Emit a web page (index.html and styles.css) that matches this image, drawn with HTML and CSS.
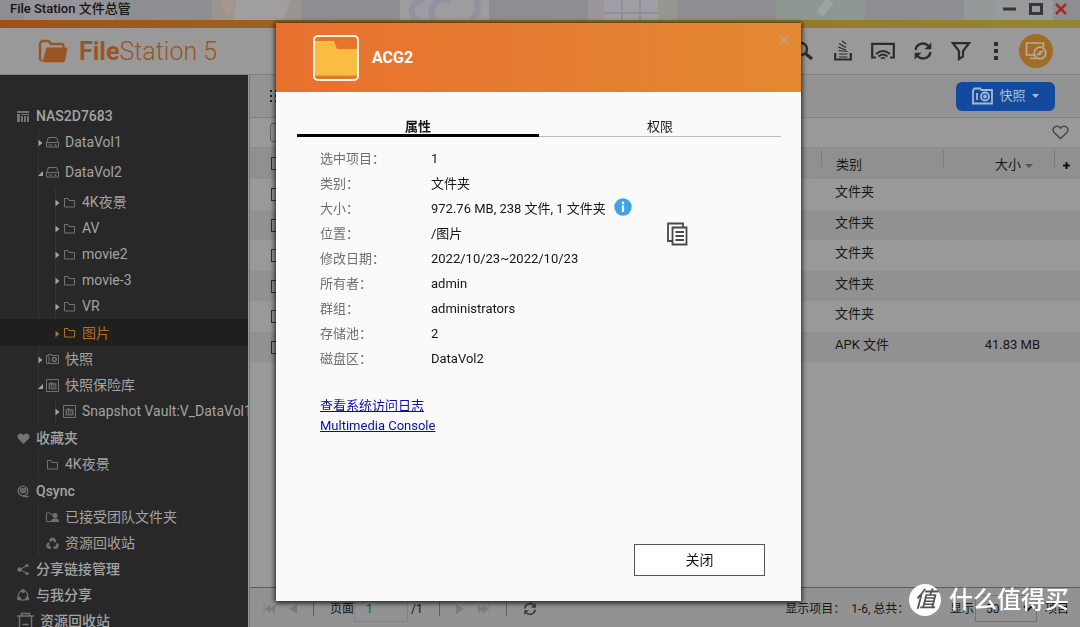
FILE: index.html
```html
<!DOCTYPE html>
<html lang="zh-CN">
<head>
<meta charset="utf-8">
<meta name="viewport" content="width=device-width, initial-scale=1">
<title>File Station 文件总管</title>
<link rel="stylesheet" href="styles.css">
</head>
<body>
<svg class="sprite" aria-hidden="true">
  <symbol id="i-folder" viewBox="0 0 13 13"><path d="M1.5 11V2.5H5l1 2h5.500V11z" fill="none" stroke="currentColor"/></symbol>
  <symbol id="i-disk" viewBox="0 0 13 13"><path d="M.5 6.500 2.500 1.500h8l2 5v4.500h-12zM.5 6.500h12M2.500 9h4" fill="none" stroke="currentColor"/><circle cx="9.500" cy="9" r="1" fill="currentColor"/></symbol>
  <symbol id="i-vault" viewBox="0 0 13 13"><path d="M.5.5h12v12H.5z" fill="none" stroke="currentColor"/><path d="M2.500 4h2V3h2v1h4v6.500h-8z" fill="currentColor" opacity=".8"/><path d="M4.500 5.500v4M6.500 6.500h2v2h-2z" fill="none" stroke="#282828" stroke-width=".7"/></symbol>
  <symbol id="i-closed" viewBox="0 0 5 8"><path d="M.5.8v6.400L4.500 4z" fill="currentColor"/></symbol>
  <symbol id="i-open" viewBox="0 0 5 8"><path d="M5 2v5H0z" fill="currentColor"/></symbol>
  <symbol id="i-refresh" viewBox="0 0 20 20"><path d="M2.500 9A7.500 7.500 0 0 1 15.500 5M17.500 11A7.500 7.500 0 0 1 4.500 15" fill="none" stroke="currentColor" stroke-width="2.400"/><path d="M18.300 1.500V8.300h-6.800zM1.700 18.500v-6.800h6.800z" fill="currentColor"/></symbol>
</svg>

<div class="app">
  <header class="titlebar">
    <svg class="titlebar-art" aria-hidden="true" width="100%" height="20">
      <g fill="#969499"><path d="M24 0h90v20H24z"/></g>
      <path d="M212 0h89v20h-89z" fill="#9b9590"/><path d="M235 0l-6 20-9-20z" fill="#a5978d"/><path d="M236 0h54l-7 20h-50z" fill="#a09e9e"/>
      <path d="M400 0h89v20h-89z" fill="#9d9da0"/><g fill="none" stroke="#9191a1" stroke-width="6"><path d="M424 0C407 4 410 14 418 22M434 22C426 4 440-4 450 0"/><path d="M476 0q6 12-6 20"/></g>
      <path d="M588 0h89v20h-89z" fill="#9a969b"/><path d="M604 0h54v20h-54z" fill="#9f9ea4"/><path d="M622 0v20M640 0v20M604 13h54" stroke="#8f8e9b" stroke-width="2"/><path d="M658 0h19v20h-19z" fill="#959892"/>
      <path d="M776 0h89v20h-89z" fill="#8f9792"/><path d="M820 14 830 0" stroke="#9da39f" stroke-width="9"/>
      <path d="M964 0h89v20h-89z" fill="#929998"/><path d="M995 0h58v20h-58z" fill="#989a9b"/>
    </svg>
    <h1 class="titlebar-text">File Station 文件总管</h1>
    <div class="window-controls">
      <button aria-label="最小化"><svg width="14" height="12"><path d="M0 6h13" stroke="#33373b" stroke-width="3"/></svg></button>
      <button aria-label="最大化"><svg width="14" height="12"><path d="M1.500 1.500h11v9h-11z" fill="none" stroke="#33373b" stroke-width="3"/></svg></button>
      <button aria-label="关闭窗口"><svg width="12" height="12"><path d="M1 1l10 10M11 1 1 11" stroke="#a52a2c" stroke-width="2.600"/></svg></button>
    </div>
  </header>
  <div class="accent"></div>

  <div class="brandbar">
    <svg width="30" height="24" viewBox="0 0 30 24" aria-hidden="true"><path d="M4 22 2 20V4.500L4 2h6.500L13 5h11.500l1 1.500v3" fill="none" stroke="#9b5523" stroke-width="2.400"/><path d="M8.500 8.500H29.500L27 22l-1.500 1.200H4.500z" fill="#9b5523"/></svg>
    <p class="brand"><b>File</b>Station 5</p>
    <nav class="tools">
      <button class="tool" aria-label="搜索"><svg width="20" height="20"><circle cx="8" cy="8" r="6" fill="none" stroke="currentColor" stroke-width="2.400"/><path d="M12.500 12.500 19 18" stroke="currentColor" stroke-width="3.200"/></svg></button>
      <button class="tool" aria-label="后台任务"><svg width="18" height="22"><path d="M1.200 13v6.500h15.600V13" fill="none" stroke="currentColor" stroke-width="2.200"/><path d="M5 17h8.500M5 14h8.500M4.500 10.500l9 1M4 7l8 3M5 3.500l7 4M8 1l4 3" stroke="currentColor" stroke-width="1.200"/></svg></button>
      <button class="tool" aria-label="投放"><svg width="24" height="18"><path d="M5 15.500H1.200V1.800h21.600v13.700H19" fill="none" stroke="currentColor" stroke-width="2.200"/><path d="M5 12q7-6 14 0M7.500 14.500q4.500-4 9 0M10 16.500q2-1.500 4 0" fill="none" stroke="currentColor" stroke-width="1.700"/></svg></button>
      <button class="tool" aria-label="刷新"><svg width="20" height="20"><use href="#i-refresh"/></svg></button>
      <button class="tool narrow" aria-label="筛选"><svg width="20" height="20"><path d="M2 2.200h16L12 10v5.500L8 18v-8z" fill="none" stroke="currentColor" stroke-width="2.200"/></svg></button>
      <button class="tool narrow" aria-label="更多"><svg width="6" height="20"><path d="M1 1h4v4H1zM1 8h4v4H1zM1 15h4v4H1z" fill="currentColor"/></svg></button>
      <button class="tool remote" aria-label="远程挂载"><svg width="22" height="20" fill="none" stroke="#b9aa98" stroke-width="1.700"><path d="M9 14H1.500V2h17v4M5 17.500h6"/><circle cx="15" cy="12" r="5.800"/><path d="M11.500 13.500h3v-3M18.500 10.500h-3v3"/></svg></button>
    </nav>
  </div>

  <div class="body">
    <aside class="sidebar">
      <ul class="tree">
        <li><a class="node root" href="#"><svg class="ico"><path d="M0 1h12v2H0zM0 4h3v8H0zM4 4h8v1H4zM4 6h2v6H4zM7 6h2v6H7zM10 6h2v6h-2z" fill="currentColor"/></svg>NAS2D7683</a>
          <ul class="l1">
            <li><a class="node" href="#"><svg class="arr"><use href="#i-closed"/></svg><svg class="ico"><use href="#i-disk"/></svg>DataVol1</a></li>
            <li><a class="node tall" href="#"><svg class="arr"><use href="#i-open"/></svg><svg class="ico"><use href="#i-disk"/></svg>DataVol2</a>
              <ul class="l2">
                <li><a class="node" href="#"><svg class="arr"><use href="#i-closed"/></svg><svg class="ico"><use href="#i-folder"/></svg>4K夜景</a></li>
                <li><a class="node" href="#"><svg class="arr"><use href="#i-closed"/></svg><svg class="ico"><use href="#i-folder"/></svg>AV</a></li>
                <li><a class="node" href="#"><svg class="arr"><use href="#i-closed"/></svg><svg class="ico"><use href="#i-folder"/></svg>movie2</a></li>
                <li><a class="node" href="#"><svg class="arr"><use href="#i-closed"/></svg><svg class="ico"><use href="#i-folder"/></svg>movie-3</a></li>
                <li><a class="node" href="#"><svg class="arr"><use href="#i-closed"/></svg><svg class="ico"><use href="#i-folder"/></svg>VR</a></li>
                <li><a class="node selected" href="#" aria-current="page"><svg class="arr"><use href="#i-closed"/></svg><svg class="ico"><use href="#i-folder"/></svg>图片</a></li>
              </ul>
            </li>
            <li><a class="node" href="#"><svg class="arr"><use href="#i-closed"/></svg><svg class="ico"><path d="M.5 2.500h2V1.500h3v1h7v8H.5zM3 3v7" fill="none" stroke="currentColor"/><circle cx="8.300" cy="6.500" r="2" fill="none" stroke="currentColor" stroke-width="1.400"/></svg>快照</a></li>
            <li><a class="node" href="#"><svg class="arr"><use href="#i-open"/></svg><svg class="ico"><use href="#i-vault"/></svg>快照保险库</a>
              <ul class="l2">
                <li><a class="node" href="#"><svg class="arr"><use href="#i-closed"/></svg><svg class="ico"><use href="#i-vault"/></svg>Snapshot Vault:V_DataVol1</a></li>
              </ul>
            </li>
          </ul>
        </li>
        <li class="spaced"><a class="node root" href="#"><svg class="ico"><path d="M6.500 12 1 6.500C-1 3 3-.5 6.500 3 10-.5 14 3 12 6.500z" fill="currentColor"/></svg>收藏夹</a>
          <ul class="l1"><li><a class="node leaf" href="#"><svg class="ico"><use href="#i-folder"/></svg>4K夜景</a></li></ul>
        </li>
        <li class="spaced"><a class="node root" href="#"><svg class="ico" fill="none" stroke="currentColor"><circle cx="6" cy="6" r="4.800" stroke-width="1.300"/><path d="M3.500 6.500V4h5v2.500M3.500 7h5M6 11.500h5.500" stroke-width="1.300"/><circle cx="6" cy="6.500" r="1.500"/></svg>Qsync</a>
          <ul class="l1">
            <li><a class="node leaf" href="#"><svg class="ico"><path d="M5 10.500H.5V2H4l1.500 1.500h2" fill="none" stroke="currentColor"/><circle cx="9" cy="4.500" r="2.500" fill="currentColor"/><path d="M5 11c0-3 2-3.500 4-3.500s4 .5 4 3.500z" fill="currentColor"/></svg>已接受团队文件夹</a></li>
            <li><a class="node leaf" href="#"><svg class="ico" fill="none" stroke="currentColor" stroke-width="2.400"><path d="M4 4.500 5.500 2h2L9.500 5M10.800 6.500l1 2-1.300 2H7.500M5 10.500H2.500L1.300 8.500 3 6"/></svg>资源回收站</a></li>
          </ul>
        </li>
        <li><a class="node root" href="#"><svg class="ico"><path d="M10 2.500 3 6.500l7 4" fill="none" stroke="currentColor"/><g fill="currentColor"><circle cx="10" cy="2.500" r="1.600"/><circle cx="2.500" cy="6.500" r="2.200"/><circle cx="10" cy="10.500" r="1.600"/></g></svg>分享链接管理</a></li>
        <li><a class="node root" href="#"><svg class="ico"><circle cx="6" cy="6.500" r="4.700" fill="none" stroke="currentColor" stroke-width="1.300"/><g fill="currentColor"><circle cx="6" cy="2" r="2"/><circle cx="2" cy="9.500" r="2"/><circle cx="10.200" cy="9.500" r="2"/></g></svg>与我分享</a></li>
        <li><a class="node root trash" href="#"><svg width="17" height="18" fill="none" stroke="#727272" stroke-width="1.400"><path d="M0 4h17M4.500 4V1.500h8V4M2.500 4v13h12V4M5.500 12.500h6"/></svg>资源回收站</a></li>
      </ul>
    </aside>

    <main class="content">
      <div class="actionbar">
        <svg width="12" height="14" aria-hidden="true"><path d="M1 1h2v2H1zM6 1h2v2H6zM1 6h2v2H1zM6 6h2v2H6zM1 11h2v2H1zM6 11h2v2H6z" fill="#222"/></svg>
        <button class="snapshot"><svg width="21" height="18" fill="none" stroke="#a9b8d2" stroke-width="1.800"><path d="M1 16.500V3.500L2.500 1.500H8L9.500 3H20v13.500z"/><path d="M5 6v7"/><circle cx="13" cy="9.500" r="4"/><circle cx="13" cy="9.500" r="1"/></svg>快照<svg width="7" height="4"><path d="M0 0h7L3.500 4z" fill="#a9b8d2"/></svg></button>
      </div>
      <div class="pathbar">
        <button class="back" aria-label="返回"></button>
        <button class="heart" aria-label="收藏"><svg width="17" height="15"><path d="M8.500 13.500 2 7.500C-1 3 5-1.500 8.500 3.200 12-1.500 18 3 15 7.500z" fill="none" stroke="#444" stroke-width="1.300"/></svg></button>
      </div>
      <table class="files">
        <thead>
          <tr><th class="c-name"><input type="checkbox" aria-label="全选"></th><th class="c-type">类别</th><th class="c-size">大小<svg width="8" height="4"><path d="M0 0h8L4 4z" fill="#555"/></svg></th><th class="c-add"><button aria-label="添加列"><svg width="7" height="7"><path d="M3.500 0v7M0 3.500h7" stroke="#111" stroke-width="2"/></svg></button></th></tr>
        </thead>
        <tbody>
          <tr><td class="c-name"><input type="checkbox" aria-label="选择第1项"></td><td>文件夹</td><td></td><td></td></tr>
          <tr><td class="c-name"><input type="checkbox" aria-label="选择第2项"></td><td>文件夹</td><td></td><td></td></tr>
          <tr><td class="c-name"><input type="checkbox" aria-label="选择第3项"></td><td>文件夹</td><td></td><td></td></tr>
          <tr><td class="c-name"><input type="checkbox" aria-label="选择第4项"></td><td>文件夹</td><td></td><td></td></tr>
          <tr><td class="c-name"><input type="checkbox" aria-label="选择第5项"></td><td>文件夹</td><td></td><td></td></tr>
          <tr><td class="c-name"><input type="checkbox" aria-label="选择第6项"></td><td>APK 文件</td><td class="c-size">41.83 MB</td><td></td></tr>
        </tbody>
      </table>
      <footer class="pager">
        <div class="pager-nav">
          <button class="dim" aria-label="首页"><svg width="12" height="10"><path d="M1 0v10M2 5l5-4v8zM7 5l5-4v8z" fill="currentColor" stroke="currentColor" stroke-width=".6"/></svg></button>
          <button class="dim" aria-label="上一页"><svg width="8" height="10"><path d="M0 5l8-5v10z" fill="currentColor"/></svg></button>
          <i class="sep"></i>
          <div class="page-field"><label for="page">页面</label><input id="page" type="text" value="1"><span>/1</span></div>
          <i class="sep"></i>
          <button class="dim" aria-label="下一页"><svg width="8" height="10"><path d="M8 5 0 0v10z" fill="currentColor"/></svg></button>
          <button class="dim" aria-label="末页"><svg width="12" height="10"><path d="M11 0v10M10 5 5 1v8zM5 5 0 1v8z" fill="currentColor" stroke="currentColor" stroke-width=".6"/></svg></button>
          <i class="sep"></i>
          <button class="reload" aria-label="重新加载"><svg width="14" height="14"><use href="#i-refresh"/></svg></button>
        </div>
        <div class="pager-info">
          <span>显示项目：&nbsp; 1-6, 总共：&nbsp; 6</span>
          <label for="size">显示</label>
          <select id="size"><option>50</option></select>
          <span>项目</span>
        </div>
      </footer>
    </main>
  </div>
</div>

<div class="modal">
  <section class="dialog" role="dialog" aria-labelledby="dialog-title">
    <header class="dialog-head">
      <svg width="46" height="46" aria-hidden="true"><path d="M2 6h19l3 8h20v27H2z" fill="#fbbd41"/><path d="M2 40.500h42V42H2z" fill="#c98a2a"/><rect x="1" y="1" width="44" height="44" rx="4" fill="none" stroke="#fff4e4" stroke-width="2"/></svg>
      <h2 id="dialog-title">ACG2</h2>
      <button class="dialog-x" aria-label="关闭对话框"><svg width="12" height="12"><path d="M1 1l10 10M11 1 1 11" stroke="#c69a68" stroke-width="2"/></svg></button>
    </header>
    <div class="tabs" role="tablist">
      <button class="tab active" role="tab" aria-selected="true">属性</button>
      <button class="tab" role="tab" aria-selected="false">权限</button>
    </div>
    <dl class="props">
      <dt>选中项目：</dt><dd>1</dd>
      <dt>类别：</dt><dd>文件夹</dd>
      <dt>大小：</dt><dd>972.76 MB, 238 文件, 1 文件夹<svg class="info" width="18" height="18"><circle cx="9" cy="9" r="8.700" fill="#3fa3e8"/><circle cx="9" cy="4.800" r="1.300" fill="#fff"/><path d="M9 7.200V14" stroke="#fff" stroke-width="2.200"/></svg></dd>
      <dt>位置：</dt><dd><span class="path">/图片</span><button class="copy" aria-label="复制路径"><svg width="21" height="24" fill="none" stroke="#484848" stroke-width="1.800"><path d="M16 5V1.500H1V19h4"/><path d="M5.500 5.500h14V22.500h-14z"/><path d="M8.500 10h8.500M8.500 14h8.500M8.500 18h8.500"/></svg></button></dd>
      <dt>修改日期：</dt><dd>2022/10/23~2022/10/23</dd>
      <dt>所有者：</dt><dd>admin</dd>
      <dt>群组：</dt><dd>administrators</dd>
      <dt>存储池：</dt><dd>2</dd>
      <dt>磁盘区：</dt><dd>DataVol2</dd>
    </dl>
    <div class="links"><a href="#">查看系统访问日志</a><a href="#">Multimedia Console</a></div>
    <div class="dialog-foot"><button class="close">关闭</button></div>
  </section>
</div>

<div class="watermark"><span class="badge">值</span><span>什么值得买</span></div>
</body>
</html>
```
FILE: styles.css
```css
* { box-sizing: border-box; }
body { margin: 0; font: 13px/20px Roboto, "Noto Sans CJK SC", sans-serif; color: #161616; background: #999; }
button { display: flex; align-items: center; justify-content: center; padding: 0; border: 0; background: none; color: inherit; font: inherit; }
svg { display: block; flex: none; }
ul { list-style: none; margin: 0; padding: 0; }
a { color: inherit; text-decoration: none; }
.sprite { display: none; }

.app { display: flex; flex-direction: column; height: 100vh; overflow: hidden; }

/* Window title */
.titlebar { position: relative; display: flex; flex: none; align-items: center; height: 20px; padding: 0 13px 2px 10px; background: #8e8d92; }
.titlebar-art { position: absolute; top: 0; left: 0; }
.titlebar-text { position: relative; flex: 1; margin: 0; font-size: 13px; line-height: 18px; font-weight: 500; }
.window-controls { position: relative; display: flex; gap: 12px; }
.accent { flex: none; height: 8px; background: linear-gradient(90deg, #a05119, #9b6220 25%, #97742a 60%, #948533 100%); }

/* Brand and tools */
.brandbar { display: flex; flex: none; align-items: center; height: 47px; padding: 0 27px 0 38px; border-bottom: 1px solid #808080; background: #999; }
.brand { margin: 2px 0 0 11px; color: #9b5523; font-size: 25px; line-height: 32px; font-weight: 300; }
.brand b { font-weight: 700; }
.tools { display: flex; align-items: center; margin-left: auto; }
.tool { width: 40px; height: 34px; color: #2c2c2c; }
.tool.narrow { width: 35px; }
.tool.remote { width: 34px; margin-left: 6px; border-radius: 50%; background: #a16c27; }

.body { display: flex; flex: 1; min-height: 0; }

/* Sidebar */
.sidebar { flex: none; width: 248px; padding-top: 28px; overflow: hidden; background: #282828; color: #a3a3a3; font-size: 14px; }
.node { display: flex; align-items: center; height: 26px; padding-left: 17px; white-space: nowrap; }
.ico { width: 13px; height: 13px; margin-right: 6px; color: #727272; }
.arr { width: 5px; height: 8px; margin: 2px 3px 0 0; }
.root { font-weight: 500; }
.l1, .l2 { background: linear-gradient(#343434, #343434) 38px 0 / 1px 100% no-repeat; }
.l1 .node { padding-left: 38px; }
.l1 .node.leaf { padding-left: 46px; }
.l2 { background-position-x: 55px; }
.l2 .node { padding-left: 55px; }
.node.tall { height: 34px; }
.spaced { padding-top: 1px; }
.node.selected { height: 27px; background: #1f1f1f; color: #a8741f; }
.selected .ico { color: inherit; }
.node.trash { gap: 6px; }

/* File list */
.content { display: flex; flex: 1; flex-direction: column; min-width: 0; margin-left: 1px; border-left: 1px solid #6e7b7b; background: #999; }
.actionbar { display: flex; flex: none; align-items: center; justify-content: space-between; height: 43px; padding: 0 25px 0 19px; border-bottom: 1px solid #818181; background: #939393; }
.snapshot { gap: 6px; width: 99px; height: 29px; border-radius: 6px; background: #134a9f; color: #b0bdd2; }
.pathbar { display: flex; flex: none; align-items: center; justify-content: space-between; height: 30px; padding: 0 11px 0 20px; border-bottom: 1px solid #8a8a8a; }
.back { width: 24px; height: 19px; border: 1px solid #626262; border-radius: 3px; }
.files { width: 100%; border-collapse: collapse; table-layout: fixed; }
.files th { position: relative; height: 31px; padding: 3px 0 0 15px; background: #909090; font-weight: 400; text-align: left; }
.files th + th::before { content: ""; position: absolute; top: 2px; bottom: 12px; left: 0; border-left: 1px solid #7b7b7b; }
.files td { height: 31px; padding: 0 0 5px 14px; }
.files tbody tr:nth-child(even) { background: #919191; }
.files tbody tr:nth-child(even) td { height: 30px; }
.files .c-name { padding: 0 0 0 21px; }
.files .c-type { width: 122px; }
.files .c-size { width: 111px; padding-right: 14px; text-align: right; }
.files th.c-size { padding-right: 21px; }
.c-size svg { display: inline-block; margin: 0 0 1px 4px; }
.files th.c-add { width: 26px; padding-left: 9px; }
.files input { display: block; appearance: none; width: 13px; height: 13px; margin: 0; border: 1px solid #2e2e2e; }

/* Pager */
.pager { display: flex; align-items: center; justify-content: space-between; height: 40px; margin-top: auto; padding: 2px 11px 0 13px; border-top: 1px solid #5c5c5c; background: #929292; font-size: 12px; }
.pager-nav, .pager-info, .page-field { display: flex; align-items: center; }
.pager-nav { gap: 14px; }
.page-field input { width: 54px; height: 26px; margin-right: 3px; padding: 0 11px; border: 1px solid #838383; background: none; color: #164a82; font: inherit; }
.sep { height: 14px; margin: 0 2px; border-left: 1px solid #606060; }
.dim { color: #7c7c7c; }
.reload { color: #3c3c3c; }
.pager-info label { margin-left: 28px; }
.pager-info select { width: 62px; height: 27px; margin: 0 8px 0 1px; padding: 0 6px; border: 1px solid #757575; border-radius: 0; background: none; color: inherit; font: inherit; }

/* Properties dialog */
.modal { position: fixed; inset: 0; display: flex; align-items: center; justify-content: center; padding: 0 3px 3px 0; }
.dialog { display: flex; flex-direction: column; width: 525px; min-height: 578px; background: #fafafa; box-shadow: 0 1px 5px 1px rgba(0, 0, 0, .8); }
.dialog-head { display: flex; align-items: center; gap: 13px; height: 69px; padding: 0 11px 0 37px; background: linear-gradient(90deg, #e8702f, #e48932); color: #fff; }
.dialog-head h2 { flex: 1; margin: 0; font-size: 16px; font-weight: 700; }
.dialog-x { align-self: flex-start; margin-top: 11px; }
.tabs { display: flex; margin: 23px 20px 0 21px; }
.tab { flex: 1; height: 22px; padding-top: 2px; border-bottom: 1px solid #bbb; }
.tab.active { padding-top: 4px; border-bottom: 3px solid #000; font-weight: 700; }
.props { display: grid; grid-template-columns: 111px 1fr; grid-auto-rows: 25px; align-items: center; margin: 9px 20px 0 44px; }
.props dt { color: #6f6f6f; }
.props dd { display: flex; align-items: center; margin: 0; }
.info { margin: 0 0 3px 8px; }
.path { width: 236px; }
.links { display: flex; flex-direction: column; align-items: flex-start; margin: 25px 44px 0; }
.links a { color: #0c0ca8; text-decoration: underline; }
.dialog-foot { display: flex; justify-content: flex-end; margin: auto 36px 25px; }
.close { width: 131px; height: 32px; border: 1px solid #555; background: #fff; font-size: 14px; }

.watermark { position: fixed; right: 11px; bottom: 11px; display: flex; align-items: center; gap: 8px; color: #fff; font-size: 24px; line-height: 32px; font-weight: 500; }
.badge { width: 32px; height: 32px; border-radius: 50%; background: #fff; color: #555; text-align: center; font-size: 22px; font-style: italic; }
```
